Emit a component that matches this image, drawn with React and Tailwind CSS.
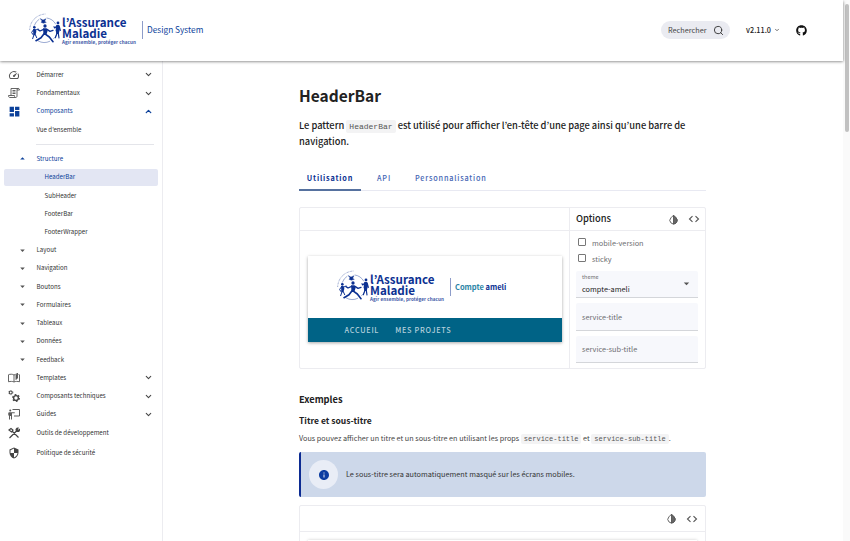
import {
  MdSpeed, MdDashboard, MdOutlineSecurity, MdArrowDropDown, MdArrowDropUp, MdInfo,
} from 'react-icons/md';
import { FaGithub } from 'react-icons/fa';
import { ChevronDown, ChevronUp, Search } from 'lucide-react';

function People({ className }) {
  return (
    <svg viewBox="0 0 96 94" className={className} fill="none" stroke="#0c3192" strokeLinecap="round" strokeLinejoin="round">
      <path d="M2 50C3 24 22 4 49 2" strokeWidth="2.6" strokeDasharray="2.500 2" strokeLinecap="butt" stroke="#7d90c2" />
      <path d="M16 36A36 36 0 0 1 30 18M54 14A36 36 0 0 1 80 32M28 83A36 36 0 0 0 62 84M74 76A36 36 0 0 0 82 66" strokeWidth="1.800" stroke="#5a74b5" />
      <path d="M34 16l8 4 9-4-4 8 5 3-9 3-7-3 3-4z" fill="#0c3192" strokeWidth="1" />
      <g fill="#0c3192" stroke="none">
        <circle cx="48" cy="38" r="5" />
        <circle cx="16" cy="42" r="4" />
        <circle cx="87" cy="29" r="4.200" />
        <path d="M42 45h11l3 7-4 13H42l1-8z" />
        <path d="M12 47h8l2 8-3 11h-6z" />
        <path d="M82 35h9l2 12-4 15h-7l-2-11z" />
      </g>
      <path d="M44 48l-11 5-6-4M54 48l9 6 9-3" strokeWidth="4" />
      <path d="M44 63l-8 10-15 9M50 63l11 8 11 14" strokeWidth="5" />
      <path d="M13 50l-5 7 3 6M21 50l6-3M15 64l-4 12M19 64l4 9" strokeWidth="3" />
      <path d="M84 38l-7 6-2-4M91 40l3 11M84 60l-5 13M88 60l2 14" strokeWidth="3.500" />
    </svg>
  );
}

function Logo() {
  return (
    <div className="flex h-[34px] w-[110px] shrink-0 text-[#0c3192]">
      <People className="h-[32px] w-[32px] shrink-0" />
      <div className="pt-[3px] pl-[1.500px] whitespace-nowrap">
        <div className="text-[11.600px] leading-[12px] font-bold">l’Assurance</div>
        <div className="-mt-px text-[11.600px] leading-[12px] font-bold">Maladie</div>
        <div className="text-[4.600px] leading-[7px] font-bold tracking-[0.080px] text-[#3d58a6]">Agir ensemble, protéger chacun</div>
      </div>
    </div>
  );
}

function ScrollIcon() {
  return (
    <svg viewBox="0 0 24 24" className="size-[12px]" fill="none" stroke="#555" strokeWidth="1.8">
      <path d="M6 17V3h15c-2 0-3 1-3 3v12c0 2-1 3-3 3H4c-2 0-3-1-3-4h12c0 3 1 4 2 4M21 3c1 0 2 1 2 3h-5M9 7h6M9 10h6M9 13h6" />
    </svg>
  );
}
function BookIcon() {
  return (
    <svg viewBox="0 0 24 24" className="size-[12px]" fill="none" stroke="#555" strokeWidth="1.800">
      <path d="M12 20V6C9 4 4 4 1 5.500v14c4-1 8-1 11 .5 3-1.500 7-1.500 11-.5V5.500l-2-.5M12 6l3-1.500" />
      <path d="M16 5l3-3v10l-3 3z" fill="#555" />
    </svg>
  );
}
function GearsIcon() {
  return (
    <svg viewBox="0 0 24 24" className="size-[12px]" fill="none" stroke="#444">
      <circle cx="5.500" cy="5" r="3" strokeWidth="2.200" />
      <circle cx="5.500" cy="5" r="4.600" strokeWidth="1" strokeDasharray="1.800 3" />
      <circle cx="16" cy="16" r="4.800" strokeWidth="2.800" />
      <circle cx="16" cy="16" r="6.700" strokeWidth="2.400" strokeDasharray="3.500 3.510" />
    </svg>
  );
}
function TeacherIcon() {
  return (
    <svg viewBox="0 0 24 24" className="size-[12px]" fill="none" stroke="#555" strokeWidth="1.900">
      <path d="M9 3h14v13H12" />
      <circle cx="4.500" cy="5" r="2" fill="#555" stroke="none" />
      <path d="M1.500 15V9.500h12M3 10v13M7 10v13M5 10v6" />
    </svg>
  );
}
function ToolsIcon() {
  return (
    <svg viewBox="0 0 24 24" className="size-[12px]" fill="none" stroke="#444" strokeWidth="2.400">
      <path d="M2 6l4-3 4 3-3 4zM8 8l13 13M3 22L17 8M17 8c-2-3 0-6 3-6l-2 4 2 1 3-2c0 4-3 5-6 3" />
    </svg>
  );
}
function ContrastDrop() {
  return (
    <svg viewBox="0 0 20 24" className="h-[11px] w-[9px]" fill="none" stroke="#555" strokeWidth="2">
      <path d="M10 2.500L4.300 8.300a8 8 0 1 0 11.400 0z" />
      <path d="M10 2.500l5.700 5.800a8 8 0 0 1-5.700 13.700z" fill="#666" />
    </svg>
  );
}

function NavRow({ icon, label, height = 'h-[18.250px]', chevron, active }) {
  const color = active ? 'text-[#0c419a]' : 'text-[#333]';
  return (
    <div className={`flex items-center pr-[9px] ${height} ${color}`}>
      <span className="flex w-[36.500px] shrink-0 pl-[8px]">{icon}</span>
      <span className="flex-1">{label}</span>
      {chevron === 'down' && <ChevronDown className="size-[9px] text-[#444]" strokeWidth={2.800} />}
      {chevron === 'up' && <ChevronUp className="size-[9px] text-[#0c419a]" strokeWidth={3.500} />}
    </div>
  );
}

function GroupRow({ label, open }) {
  return (
    <div className={`flex h-[18.250px] items-center ${open ? 'text-[#0c419a]' : 'text-[#333]'}`}>
      <span className="flex w-[36.500px] shrink-0 pl-[17px]">
        {open ? <MdArrowDropUp size={11} /> : <MdArrowDropDown size={11} color="#555" />}
      </span>
      <span>{label}</span>
    </div>
  );
}

function Sidebar() {
  return (
    <nav className="w-[163px] shrink-0 border-r border-[#ececf0] pt-[5.200px] text-[6.150px] leading-[10px] whitespace-nowrap">
      <NavRow icon={<MdSpeed size={12} color="#555" />} label="Démarrer" chevron="down" />
      <NavRow icon={<ScrollIcon />} label="Fondamentaux" chevron="down" />
      <NavRow icon={<MdDashboard size={13} color="#0c419a" />} label="Composants" chevron="up" active />
      <div className="flex h-[20px] items-center pl-[36.500px] text-[#333]">Vue d’ensemble</div>
      <div className="mt-[4px] mr-[8px] ml-[36px] h-px bg-[#e4e5ea]" />
      <div className="h-[4px]" />
      <GroupRow label="Structure" open />
      <div className="mx-[4px] mt-[1.500px] flex h-[16.500px] items-center rounded-[2px] bg-[#e3e6f3] pl-[40.500px] text-[#0c419a]">HeaderBar</div>
      <div className="mt-[1px] text-[#333]">
        {['SubHeader', 'FooterBar', 'FooterWrapper'].map((t) => (
          <div key={t} className="flex h-[18.250px] items-center pl-[44.500px]">{t}</div>
        ))}
      </div>
      <div className="-mt-[0.500px]">
        {['Layout', 'Navigation', 'Boutons', 'Formulaires', 'Tableaux', 'Données', 'Feedback'].map((t) => (
          <GroupRow key={t} label={t} />
        ))}
      </div>
      <NavRow icon={<BookIcon />} label="Templates" chevron="down" />
      <NavRow icon={<GearsIcon />} label="Composants techniques" chevron="down" />
      <NavRow icon={<TeacherIcon />} label="Guides" chevron="down" />
      <NavRow icon={<ToolsIcon />} label="Outils de développement" />
      <NavRow icon={<MdOutlineSecurity size={12} color="#444" />} label="Politique de sécurité" height="h-[22px]" />
    </nav>
  );
}

function CodeIcon() {
  return (
    <svg viewBox="0 0 12 10" className="h-[10px] w-[12px]" fill="none" stroke="#555" strokeWidth="1.100">
      <path d="M4.500 2.200L1.500 5l3 2.800M7.500 2.200l3 2.800-3 2.800" />
    </svg>
  );
}

function Code({ children, className }) {
  return (
    <code className={`rounded-[2px] bg-[#f3f3f4] font-['Liberation_Mono',monospace] leading-none text-[#555] ${className}`}>{children}</code>
  );
}

function Field({ label }) {
  return (
    <div className="mt-[5px] flex h-[27.500px] items-center rounded-t-[2px] border-b border-[#d4d6da] bg-[#f7f8fc] pl-[6.500px] text-[#6d6d70]">{label}</div>
  );
}

function Playground() {
  return (
    <section className="mt-[16px] flex h-[162px] rounded-[2px] border border-[#ececf0]">
      <div className="w-[269px] shrink-0">
        <div className="h-[23px] border-b border-[#ececf0]" />
        <div className="mt-[25px] ml-[8px] w-[254px] shadow-[0_1px_3px_rgba(0,0,0,0.35)]">
          <div className="flex h-[62px] items-center bg-white pl-[28.500px]">
            <Logo />
            <div className="ml-[3.500px] h-[18px] w-px bg-[#8d9cc9]" />
            <div className="mb-[1px] ml-[4px] text-[7.500px] leading-[12px] font-bold whitespace-nowrap text-[#0c3192]">
              <span className="text-[#2b84a6]">Compte</span> ameli
            </div>
          </div>
          <div className="flex h-[24px] items-center gap-[16px] bg-[#006386] pl-[36.500px] text-[7.300px] font-medium tracking-[0.730px] text-[#b4d0dc]">
            <span>ACCUEIL</span>
            <span>MES PROJETS</span>
          </div>
        </div>
      </div>
      <div className="flex-1 border-l border-[#ececf0] text-[7.350px] leading-[11px]">
        <div className="flex h-[23px] items-center border-b border-[#ececf0] pr-[5px] pl-[6px]">
          <span className="mb-[2px] flex-1 text-[9.300px] font-medium text-[#222]">Options</span>
          <ContrastDrop />
          <span className="ml-[10px]"><CodeIcon /></span>
        </div>
        <div className="pt-[3px] pr-[7px] pl-[5.500px] text-[#6d6d70]">
          {['mobile-version', 'sticky'].map((t) => (
            <div key={t} className="flex h-[16px] items-center pl-[2px]">
              <span className="size-[8px] rounded-[1px] border border-[#777]" />
              <span className="ml-[6.500px]">{t}</span>
            </div>
          ))}
          <div className="mt-[5px] flex h-[27px] items-center justify-between rounded-t-[2px] border-b border-[#d4d6da] bg-[#f7f8fc] pr-[5px] pl-[6.500px]">
            <div>
              <div className="text-[5.500px] leading-[9px]">theme</div>
              <div className="leading-[13px] text-[#222]">compte-ameli</div>
            </div>
            <MdArrowDropDown size={13} color="#555" className="mb-[2px]" />
          </div>
          <Field label="service-title" />
          <Field label="service-sub-title" />
        </div>
      </div>
    </section>
  );
}

function Header() {
  return (
    <header className="relative z-10 flex h-[60.500px] w-[843px] shrink-0 items-center bg-white pl-[28.500px] shadow-[0_0.5px_3px_rgba(0,0,0,0.55)]">
      <Logo />
      <div className="ml-[3.500px] h-[18px] w-px bg-[#8d9cc9]" />
      <div className="mb-[2px] ml-[4px] flex-1 text-[8.300px] leading-[12px] text-[#0c3f9b]">Design System</div>
      <div className="flex h-[18px] w-[69px] items-center rounded-full bg-[#eaebf1] pl-[7px] text-[7.300px] text-[#444]">
        <span className="w-[45px]">Rechercher</span>
        <Search className="size-[11px] text-[#333]" strokeWidth={2} />
      </div>
      <div className="ml-[16px] flex w-[50px] items-center text-[7.300px] font-medium text-[#222]">
        <span>v2.11.0</span>
        <ChevronDown className="ml-[3px] size-[6px] text-[#444]" strokeWidth={3} />
      </div>
      <FaGithub size={11} color="#111" className="mr-[36px]" />
    </header>
  );
}

export default function App() {
  return (
    <div className="flex h-[541px] w-[850px] overflow-hidden bg-white font-['Noto_Sans_CJK_JP',sans-serif]">
      <div className="flex w-[843px] shrink-0 flex-col">
        <Header />
        <div className="flex min-h-0 flex-1">
          <Sidebar />
          <main className="ml-[136px] w-[407px] pt-[22.500px] text-[#222]">
            <h1 className="text-[15.500px] leading-[24px] font-bold whitespace-nowrap">HeaderBar</h1>
            <p className="mt-[10px] text-[9.320px] leading-[16px] font-medium whitespace-nowrap">
              Le pattern <Code className="px-[3px] py-[2px] text-[8px] font-normal">HeaderBar</Code> est utilisé pour afficher l’en-tête d’une page ainsi qu’une barre de
              <br />
              navigation.
            </p>
            <div className="mt-[18px] flex h-[24px] border-b border-[#e8e9f2] text-[7.300px] font-medium tracking-[0.800px] whitespace-nowrap text-[#4465b4]">
              <div className="flex h-[24px] w-[62px] items-center justify-center border-b-2 border-[#56719f] font-bold text-[#0c3192]">Utilisation</div>
              <div className="flex w-[46px] items-center justify-center">API</div>
              <div className="flex items-center pl-[8px]">Personnalisation</div>
            </div>
            <Playground />
            <h2 className="mt-[22px] text-[9.300px] leading-[16px] font-bold">Exemples</h2>
            <h3 className="mt-[6px] text-[8.500px] leading-[15px] font-bold">Titre et sous-titre</h3>
            <p className="mt-[3px] text-[7.250px] leading-[14px] whitespace-nowrap text-[#444]">
              Vous pouvez afficher un titre et un sous-titre en utilisant les props{' '}
              <Code className="px-[3px] py-[1px] text-[7px]">service-title</Code> et{' '}
              <Code className="px-[3px] py-[1px] text-[7px]">service-sub-title</Code>.
            </p>
            <div className="mt-[7px] flex h-[45px] items-center rounded-[2px] border-l-2 border-[#0c2b92] bg-[#cdd8ea] pl-[8px] text-[7.300px] text-[#333]">
              <span className="flex size-[29px] items-center justify-center rounded-full bg-[#e9edf6]">
                <MdInfo size={12} color="#0c3ca0" />
              </span>
              <span className="ml-[8px]">Le sous-titre sera automatiquement masqué sur les écrans mobiles.</span>
            </div>
            <div className="mt-[8px] h-[60px] rounded-[2px] border border-[#ececf0]">
              <div className="flex h-[26px] items-center justify-end border-b border-[#ececf0] pr-[7px]">
                <ContrastDrop />
                <span className="ml-[10px]"><CodeIcon /></span>
              </div>
              <div className="mx-[8px] mt-[8px] h-[20px] shadow-[0_0_3px_rgba(0,0,0,0.2)]" />
            </div>
          </main>
        </div>
      </div>
      <div className="w-[7px] bg-[#fafafa] pt-[4px] pl-[1.500px]">
        <div className="h-[128px] w-[4px] rounded-full bg-[#c1c1c1]" />
      </div>
    </div>
  );
}
